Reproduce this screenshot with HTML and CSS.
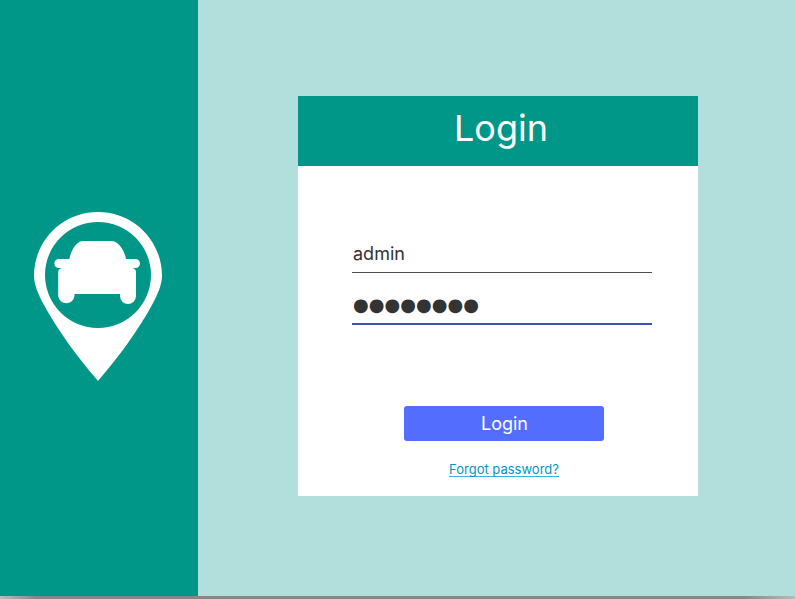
FILE: index.html
```html
<!DOCTYPE html>
<html lang="en">
<head>
<meta charset="utf-8">
<title>Login</title>
<link rel="stylesheet" href="styles.css">
</head>
<body>
<div class="window">
  <aside class="sidebar">
    <svg class="pin" viewBox="34 212 128 169" aria-hidden="true">
      <path fill="#fff" fill-rule="evenodd" d="M98 212C133 212 162 240 162 276C162 284 158 294 152 305C139 329 118 358 98 381C78 358 57 329 44 305C38 294 34 284 34 276C34 240 63 212 98 212ZM98 222A53 53 0 1 0 98 328A53 53 0 1 0 98 222Z"/>
      <path fill="#fff" d="M83.500 241H111C119 241 124.500 251 126 259H135.500A4.500 4.500 0 0 1 135.500 268H132.500Q136 269 136 272V296A8 8 0 0 1 120 296V294H74.500V296A8.200 8.200 0 0 1 58.200 296V272Q58.200 269 61.500 268H58.800A4.500 4.500 0 0 1 58.800 259H69.300C71 251 76 241 83.500 241Z"/>
    </svg>
  </aside>
  <main class="content">
    <section class="card">
      <h1 class="title">Login</h1>
      <form class="form">
        <div class="field">admin</div>
        <div class="field field-active"><span class="mask">●●●●●●●●</span></div>
        <button class="submit" type="button">Login</button>
        <a class="forgot">Forgot password?</a>
      </form>
    </section>
  </main>
</div>
<div class="edge"></div>
</body>
</html>
```
FILE: styles.css
```css
* { box-sizing: border-box; }
body {
  margin: 0;
  height: 599px;
  overflow: hidden;
  font-family: Inter, "Liberation Sans", sans-serif;
  color: #333;
}
.window { display: flex; height: 596px; }
.sidebar {
  width: 198px;
  padding: 212px 0 0 34px;
  background: #009788;
}
.pin { display: block; width: 128px; height: 169px; }
.content {
  flex: 1;
  padding: 96px 0 0 100px;
  background: #b2dfdb;
}
.card { width: 400px; height: 400px; background: #fff; }
.title {
  margin: 0;
  height: 70px;
  padding-left: 6px;
  background: #009788;
  color: #fff;
  font-size: 36px;
  font-weight: 400;
  line-height: 65px;
  text-align: center;
}
.form {
  display: flex;
  flex-direction: column;
  padding: 70px 46px 0 54px;
}
.field {
  height: 37px;
  padding-left: 1px;
  border-bottom: 1px solid #4d4d4d;
  font-size: 18px;
  line-height: 36px;
  white-space: nowrap;
}
.field-active {
  height: 38px;
  margin-top: 14px;
  border-bottom: 2px solid #3f51b5;
}
.mask {
  font-family: "DejaVu Sans", sans-serif;
  font-size: 18px;
  letter-spacing: 0.05px;
}
.submit {
  align-self: center;
  width: 200px;
  height: 35px;
  margin: 81px 0 0 4px;
  padding: 0 0 0 1px;
  border: 0;
  border-radius: 3px;
  background: #536dfe;
  color: #fff;
  font: 18px/35px Inter, "Liberation Sans", sans-serif;
}
.forgot {
  align-self: center;
  height: 15px;
  margin: 21px 0 0 4px;
  border-bottom: 1px solid #39b1d8;
  color: #0095c8;
  font-size: 13px;
  line-height: 15px;
}
.edge {
  height: 3px;
  background: linear-gradient(90deg, #bbb 0, #8b8685 35px, #8b8685 745px, #bbb 795px);
}
```
